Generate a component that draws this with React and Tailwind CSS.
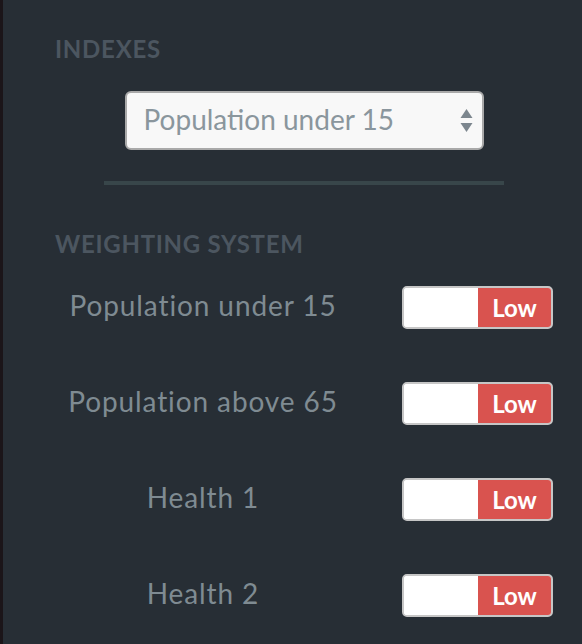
import { useState } from "react"

const weights = [
  "Population under 15",
  "Population above 65",
  "Health 1",
  "Health 2",
]

function Toggle({ on, onClick }) {
  return (
    <button
      type="button"
      onClick={onClick}
      className="flex h-[43px] w-[151px] overflow-hidden rounded-[5px] border-2 border-[#c6c6c6] bg-white"
    >
      <span className="h-full w-[74px] bg-white" />
      <span className="flex h-full flex-1 items-center justify-center bg-[#d9534f] text-[24px] font-bold text-white">
        {on ? "High" : "Low"}
      </span>
    </button>
  )
}

export default function App() {
  const [flags, setFlags] = useState(weights.map(() => false))

  return (
    <div className="flex min-h-screen w-full bg-[#272e35]" style={{ fontFamily: "Lato, 'Open Sans', sans-serif" }}>
      <div className="w-[3px] shrink-0 bg-[#1b1519]" />
      <div className="pl-[52px] pt-[37px]">
        <div className="w-[498px]">
          <h3 className="text-[24px] font-bold leading-[24px] tracking-[0.75px] text-[#4c5660]">INDEXES</h3>

          <div className="mt-[30px] flex justify-center">
            <div className="relative flex h-[59px] w-[359px] items-center rounded-[6px] border-2 border-[#a9a9a9] bg-[#f8f8f8] pb-[3px] pl-[17px]">
              <span className="text-[28px] text-[#8a969d]">Population under 15</span>
              <svg className="absolute right-[9px] top-[16px]" width="13" height="24" viewBox="0 0 13 24">
                <path d="M6.5 0 L12.5 9 L0.5 9 Z" fill="#7c868e" />
                <path d="M0.5 14 L12.5 14 L6.5 23 Z" fill="#7c868e" />
              </svg>
            </div>
          </div>

          <div className="mx-auto mt-[31px] h-[4px] w-[400px] bg-[#38464a]" />

          <h3 className="mt-[47px] text-[24px] font-bold leading-[24px] tracking-[0.72px] text-[#4c5660]">
            WEIGHTING SYSTEM
          </h3>

          <div className="mt-[30px] flex flex-col gap-[53px]">
            {weights.map((w, i) => (
              <div key={w} className="flex items-center">
                <span className="w-[296px] pb-[5px] text-center text-[28px] leading-[34px] tracking-[0.9px] text-[#7f8b92]">
                  {w}
                </span>
                <span className="ml-auto">
                  <Toggle
                    on={flags[i]}
                    onClick={() => setFlags(flags.map((f, j) => (j === i ? !f : f)))}
                  />
                </span>
              </div>
            ))}
          </div>
        </div>
      </div>
    </div>
  )
}
